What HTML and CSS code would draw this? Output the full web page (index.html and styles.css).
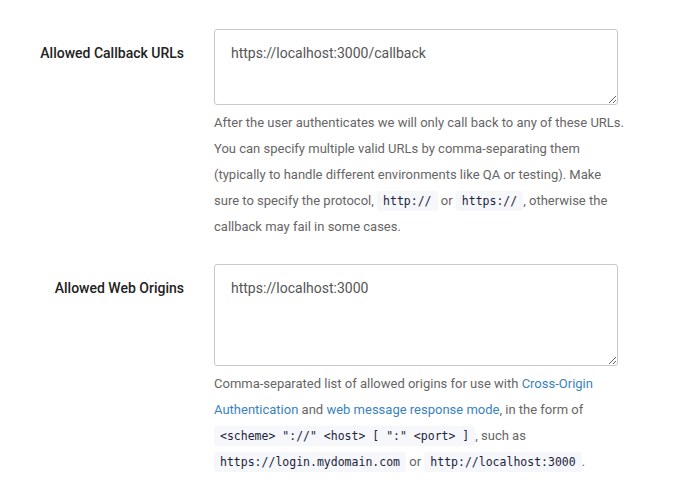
FILE: index.html
```html
<!DOCTYPE html>
<html lang="en">
  <head>
    <meta charset="UTF-8" />
    <meta name="viewport" content="width=device-width, initial-scale=1.0" />
    <title>Application URIs</title>
    <link rel="stylesheet" href="styles.css">
  </head>
  <body>
    <form class="settings">
      <div class="field">
        <label class="field-label" for="callbacks">Allowed Callback URLs</label>
        <div class="field-body">
          <textarea id="callbacks" class="field-input short">https://localhost:3000/callback</textarea>
          <p class="help">
            After the user authenticates we will only call back to any of these URLs.
            You can specify multiple valid URLs by comma-separating them
            (typically to handle different environments like QA or testing). Make
            sure to specify the protocol, <code>http://</code> or <code>https://</code>, otherwise the
            callback may fail in some cases.
          </p>
        </div>
      </div>

      <div class="field">
        <label class="field-label" for="origins">Allowed Web Origins</label>
        <div class="field-body">
          <textarea id="origins" class="field-input tall">https://localhost:3000</textarea>
          <p class="help">
            Comma-separated list of allowed origins for use with <a href="#">Cross-Origin
            Authentication</a> and <a href="#">web message response mode</a>, in the form of
            <code>&lt;scheme&gt; "://" &lt;host&gt; [ ":" &lt;port&gt; ]</code>, such as
            <code>https://login.mydomain.com</code> or <code>http://localhost:3000</code>.
          </p>
        </div>
      </div>
    </form>
  </body>
</html>
```

FILE: styles.css
```css
body {
  margin: 0;
  background: #fff;
  font-family: Roboto, "Noto Sans", sans-serif;
  color: #333;
}

.settings {
  padding-top: 29px;
}

.field {
  display: flex;
  gap: 30px;
  margin-bottom: 24px;
}

.field-label {
  width: 184px;
  flex: none;
  text-align: right;
  font-size: 14px;
  font-weight: 500;
  color: #222;
  padding-top: 14px;
  line-height: 20px;
}

.field-body {
  width: 404px;
}

.field-input {
  display: block;
  box-sizing: border-box;
  width: 404px;
  margin: 0;
  padding: 13px 16px;
  border: 1px solid #c9c9c9;
  border-radius: 3px;
  font-family: Roboto, "Noto Sans", sans-serif;
  font-size: 14px;
  line-height: 20px;
  color: #555;
  resize: vertical;
}

.short {
  height: 76px;
}

.tall {
  height: 102px;
}

.help {
  margin: 5px -10px 0 0;
  font-size: 13px;
  line-height: 26px;
  color: #666;
}

.help a {
  color: #3a83be;
  text-decoration: none;
}

.help code {
  font-family: "DejaVu Sans Mono", monospace;
  font-size: 11.5px;
  color: #1c2340;
  background: #f5f7fa;
  border-radius: 3px;
  padding: 3px 6px;
  white-space: nowrap;
}
```
